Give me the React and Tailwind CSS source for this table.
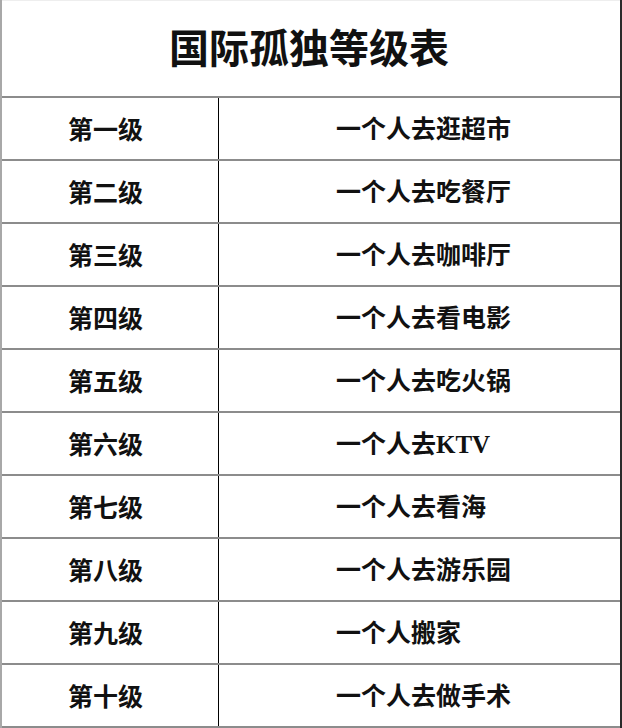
export default function App() {
  const rows = [
    ["第一级", "一个人去逛超市"],
    ["第二级", "一个人去吃餐厅"],
    ["第三级", "一个人去咖啡厅"],
    ["第四级", "一个人去看电影"],
    ["第五级", "一个人去吃火锅"],
    ["第六级", "一个人去KTV"],
    ["第七级", "一个人去看海"],
    ["第八级", "一个人去游乐园"],
    ["第九级", "一个人搬家"],
    ["第十级", "一个人去做手术"],
  ];
  const font = { fontFamily: '"Liberation Serif", "Noto Sans CJK SC", serif' };
  return (
    <div
      className="w-[622px] h-[728px] bg-white border-l-2 border-l-[#a8a8a8] border-r-2 border-r-[#2a2a2a] text-[#111] overflow-hidden"
      style={font}
    >
      <div className="h-[98px] border-t border-t-[#eeeeee] border-b-2 border-b-[#8c8c8c] flex items-center justify-center pt-[2px]">
        <span className="text-[40px] font-bold leading-none pr-[4px]">国际孤独等级表</span>
      </div>
      {rows.map(([a, b], i) => (
        <div key={i} className="h-[63px] border-b-2 border-b-[#8c8c8c] flex">
          <div className="w-[216px] flex items-center pl-[66px] pt-[4px]">
            <span className="text-[25px] font-bold leading-none">{a}</span>
          </div>
          <div className="flex-1 border-l border-l-[#000] flex items-center pl-[117px] pt-[2px]">
            <span className="text-[25px] font-bold leading-none">{b}</span>
          </div>
        </div>
      ))}
    </div>
  );
}
